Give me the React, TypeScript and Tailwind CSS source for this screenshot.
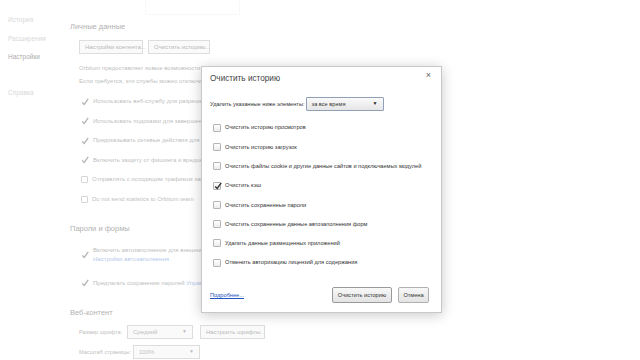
import React from 'react'

const font = { fontFamily: '"Liberation Sans", "Noto Sans", Arial, sans-serif' }

function Check({ checked }: { checked?: boolean }) {
  return (
    <span className="relative flex h-[8px] w-[8px] shrink-0 items-center justify-center rounded-[1px] border border-[#b5b5b5] bg-gradient-to-b from-white to-[#ececec]">
      {checked && (
        <svg viewBox="0 0 10 10" className="absolute -top-[1px] left-[0px] h-[8px] w-[8px]">
          <path d="M1.5 5.5 L4 8 L9 1" fill="none" stroke="#333" strokeWidth="1.8" />
        </svg>
      )}
    </span>
  )
}

function BgCheck({ checked, children }: { checked?: boolean; children: React.ReactNode }) {
  return (
    <div className="flex h-[19.5px] items-center gap-[4px]">
      {checked ? (
        <svg viewBox="0 0 10 10" className="h-[8px] w-[8px] shrink-0">
          <path d="M1.5 5.5 L4 8 L9 1" fill="none" stroke="#444" strokeWidth="1.6" />
        </svg>
      ) : (
        <span className="h-[7px] w-[7px] shrink-0 rounded-[1px] border border-[#999]" />
      )}
      <span className="whitespace-nowrap">{children}</span>
    </div>
  )
}

function BgButton({ children, className = '' }: { children: React.ReactNode; className?: string }) {
  return (
    <div
      className={`flex h-[14px] items-center whitespace-nowrap border border-[#aaa] bg-[#f2f2f2] px-[5px] text-[#444] ${className}`}
    >
      {children}
    </div>
  )
}

function BgSelect({ value, className = '' }: { value: string; className?: string }) {
  return (
    <div className={`flex h-[14px] items-center justify-between border border-[#aaa] bg-[#f2f2f2] px-[5px] ${className}`}>
      <span>{value}</span>
      <span className="text-[5px]">▼</span>
    </div>
  )
}

function Settings() {
  return (
    <div className="flex h-full text-[6px] text-[#555]" style={font}>
      <div className="flex w-[62px] shrink-0 flex-col pl-[8px] pt-[15px] text-[6.5px]">
        <div className="h-[19px] leading-[10px] text-[#999]">История</div>
        <div className="h-[18px] leading-[10px] text-[#999]">Расширения</div>
        <div className="h-[10px] leading-[10px] text-[#222]">Настройки</div>
        <div className="mt-[26px] leading-[10px] text-[#999]">Справка</div>
      </div>

      <div className="flex min-w-0 flex-1 flex-col pl-[8px] pt-[21px]">
        <div className="h-[12px] text-[7.5px] leading-[12px] text-[#333]">Личные данные</div>
        <div className="flex flex-col pl-[9px]">
          <div className="mt-[7px] flex gap-[5px]">
            <BgButton className="w-[64px]">Настройки контента...</BgButton>
            <BgButton className="w-[62px]">Очистить историю...</BgButton>
          </div>
          <div className="mt-[9px] h-[10px] whitespace-nowrap leading-[10px]">
            Orbitum предоставляет новые возможности для удобства работы в Интернете с помощью веб-служб.
          </div>
          <div className="mt-[3px] h-[10px] whitespace-nowrap leading-[10px]">
            Если требуется, эти службы можно отключить. Подробнее...
          </div>
          <div className="mt-[6px] flex flex-col pl-[2px]">
            <BgCheck checked>Использовать веб-службу для разрешения проблем, связанных с навигацией</BgCheck>
            <BgCheck checked>Использовать подсказки для завершения поисковых запросов</BgCheck>
            <BgCheck checked>Предсказывать сетевые действия для ускорения загрузки страниц</BgCheck>
            <BgCheck checked>Включить защиту от фишинга и вредоносного ПО</BgCheck>
            <BgCheck>Отправлять с исходящим трафиком запрос «Не отслеживать»</BgCheck>
            <BgCheck>Do not send statistics to Orbitum team</BgCheck>
          </div>
        </div>

        <div className="mt-[14px] h-[12px] text-[7.5px] leading-[12px] text-[#333]">Пароли и формы</div>
        <div className="mt-[10px] flex flex-col pl-[11px]">
          <div className="flex h-[20px] items-center gap-[4px]">
            <svg viewBox="0 0 10 10" className="h-[8px] w-[8px] shrink-0">
              <path d="M1.5 5.5 L4 8 L9 1" fill="none" stroke="#444" strokeWidth="1.6" />
            </svg>
            <div className="flex flex-col leading-[9px]">
              <span className="whitespace-nowrap">Включить автозаполнение для внешних данных одним кликом</span>
              <span className="whitespace-nowrap text-[#3a6fc4]">Настройки автозаполнения</span>
            </div>
          </div>
          <div className="mt-[12px] flex h-[12px] items-center gap-[4px]">
            <svg viewBox="0 0 10 10" className="h-[8px] w-[8px] shrink-0">
              <path d="M1.5 5.5 L4 8 L9 1" fill="none" stroke="#444" strokeWidth="1.6" />
            </svg>
            <span className="whitespace-nowrap">
              Предлагать сохранение паролей <span className="text-[#3a6fc4]">Управление сохраненными паролями</span>
            </span>
          </div>
        </div>

        <div className="mt-[18px] h-[12px] text-[7.5px] leading-[12px] text-[#333]">Веб-контент</div>
        <div className="flex flex-col pl-[9px]">
          <div className="mt-[6px] flex items-center">
            <span className="w-[48px] whitespace-nowrap text-[5.6px]">Размер шрифта:</span>
            <BgSelect value="Средний" className="w-[66px]" />
            <BgButton className="ml-[7px] w-[65px]">Настроить шрифты...</BgButton>
          </div>
          <div className="mt-[6px] flex items-center">
            <span className="w-[54px] whitespace-nowrap text-[5.6px]">Масштаб страницы:</span>
            <BgSelect value="100%" className="w-[67px]" />
          </div>
        </div>
      </div>
    </div>
  )
}

const items: Array<{ label: string; checked?: boolean }> = [
  { label: 'Очистить историю просмотров' },
  { label: 'Очистить историю загрузок' },
  { label: 'Очистить файлы cookie и другие данные сайтов и подключаемых модулей' },
  { label: 'Очистить кэш', checked: true },
  { label: 'Очистить сохраненные пароли' },
  { label: 'Очистить сохраненные данные автозаполнения форм' },
  { label: 'Удалить данные размещенных приложений' },
  { label: 'Отменить авторизацию лицензий для содержания' },
]

function ClearDialog() {
  return (
    <div
      className="absolute left-[201px] top-[66px] flex h-[247px] w-[241px] flex-col border border-[#c8c8c8] bg-white px-[8px] text-[5.65px] text-[#333] shadow-[0_2px_12px_rgba(0,0,0,0.22)]"
      style={font}
    >
      <div className="flex h-[24px] items-center justify-between pt-[1px]">
        <span className="text-[8.2px] text-[#444]">Очистить историю</span>
        <span className="-mt-[8px] mr-[2px] text-[9px] text-[#666]">×</span>
      </div>
      <div className="mt-[6px] flex h-[14px] items-center gap-[1px]">
        <span className="whitespace-nowrap">Удалить указанные ниже элементы:</span>
        <div className="flex h-[14px] w-[78px] items-center justify-between rounded-[1px] border border-[#8fa0b8] bg-gradient-to-b from-[#fafafa] to-[#e6e6e6] px-[5px]">
          <span>за все время</span>
          <span className="text-[5px] text-[#222]">▼</span>
        </div>
      </div>
      <div className="mt-[7px] flex flex-col pl-[3px]">
        {items.map((item) => (
          <div key={item.label} className="flex h-[19.3px] items-center gap-[4px]">
            <Check checked={item.checked} />
            <span className="whitespace-nowrap">{item.label}</span>
          </div>
        ))}
      </div>
      <div className="mt-auto mb-[9px] flex items-center pr-[4px]">
        <span className="text-[#2255bb] underline">Подробнее...</span>
        <div className="ml-auto flex gap-[6px]">
          <div className="flex h-[16px] w-[60px] items-center justify-center rounded-[2px] border border-[#9a9a9a] bg-gradient-to-b from-[#f8f8f8] to-[#e3e3e3]">
            Очистить историю
          </div>
          <div className="flex h-[16px] w-[31px] items-center justify-center rounded-[2px] border border-[#b0b0b0] bg-gradient-to-b from-[#f8f8f8] to-[#e3e3e3]">
            Отмена
          </div>
        </div>
      </div>
    </div>
  )
}

export default function App() {
  return (
    <div className="relative h-[360px] w-[640px] overflow-hidden bg-white">
      <Settings />
      <div className="absolute left-[145px] top-0 h-[15px] w-[95px] border border-t-0 border-[#eee]" />
      <div className="absolute inset-0 bg-white/60" />
      <ClearDialog />
    </div>
  )
}
